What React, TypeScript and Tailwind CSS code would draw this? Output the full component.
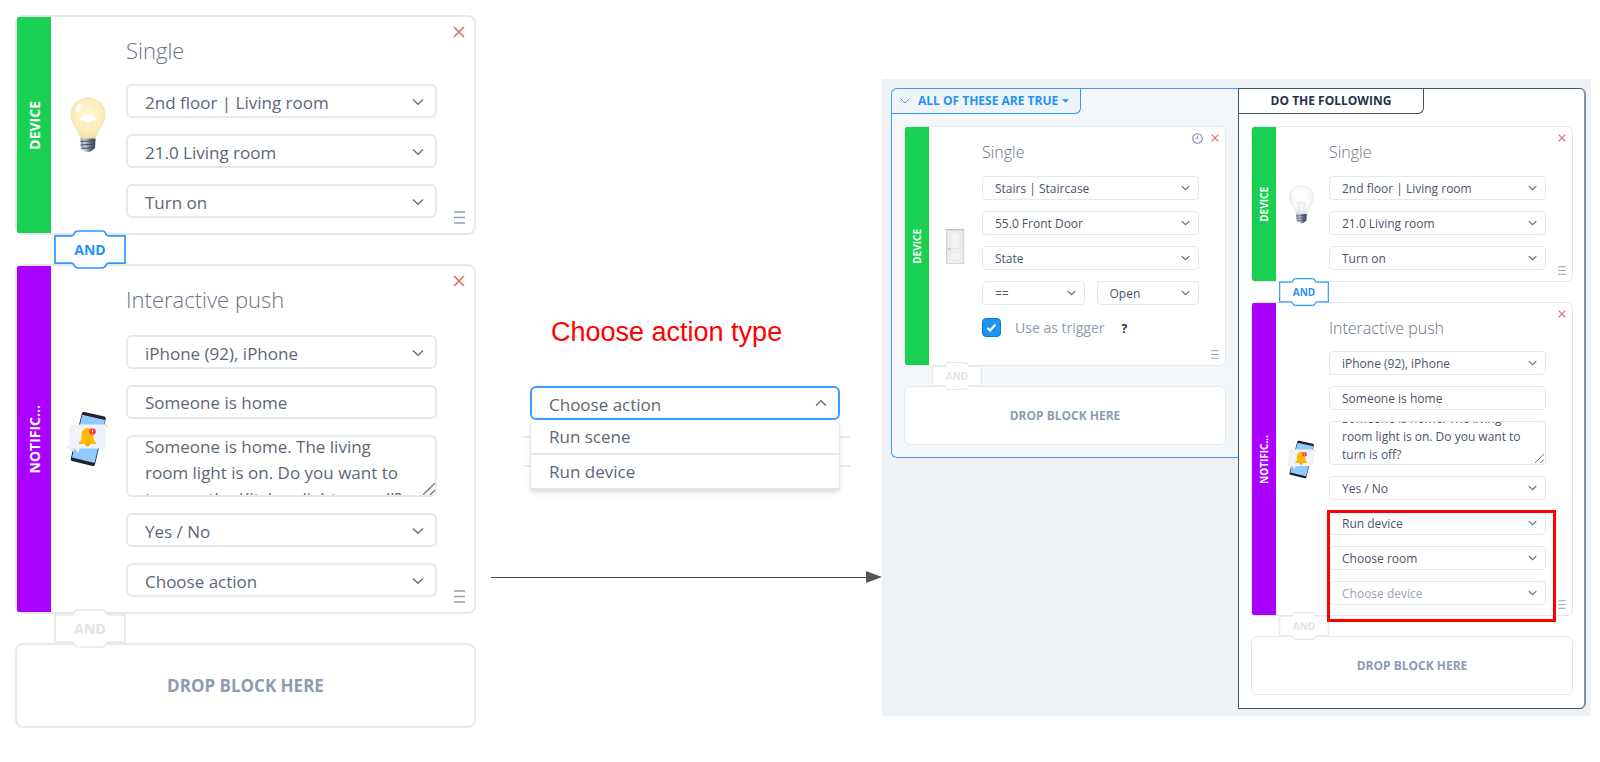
import React from 'react';

type Size = 'lg' | 'sm';

const ChevronIcon: React.FC<{ size: Size; up?: boolean }> = ({ size, up }) => (
  <svg
    viewBox="0 0 12 8"
    className={size === 'lg' ? 'w-3 h-2' : 'w-[9px] h-[6px]'}
    fill="none"
    stroke="#6b6f76"
    strokeWidth={size === 'lg' ? 1.4 : 1.7}
  >
    <path d={up ? 'M1 6.5 L6 1.8 L11 6.5' : 'M1 1.5 L6 6.2 L11 1.5'} />
  </svg>
);

const BulbIcon: React.FC<{ on?: boolean; className: string }> = ({ on, className }) => {
  const id = on ? 'bulb-on' : 'bulb-off';
  return (
    <svg viewBox="0 0 36 56" className={className}>
      <defs>
        <radialGradient id={id} cx="0.5" cy="0.42" r="0.62">
          <stop offset="0" stopColor={on ? '#fff8dc' : '#ffffff'} />
          <stop offset="0.65" stopColor={on ? '#fdedbb' : '#f8f8f9'} />
          <stop offset="1" stopColor={on ? '#f2dcab' : '#dfdfe2'} />
        </radialGradient>
        <linearGradient id={`${id}-base`} x1="0" x2="1">
          <stop offset="0" stopColor="#8d95a5" />
          <stop offset="0.3" stopColor="#c9ced8" />
          <stop offset="0.7" stopColor="#5b6478" />
          <stop offset="1" stopColor="#3f485c" />
        </linearGradient>
      </defs>
      <path
        d="M18 1 C8 1 1 8 1 17.5 C1 23 3.5 27 6 31 C8.5 35 9.5 37 10.5 41.5 L25.5 41.5 C26.5 37 27.5 35 30 31 C32.5 27 35 23 35 17.5 C35 8 28 1 18 1 Z"
        fill={`url(#${id})`}
        stroke={on ? '#efdfba' : '#dcdcde'}
        strokeWidth="0.8"
      />
      <path d="M15.5 40 L13.5 24 L16.5 27 L18 24 L19.5 27 L22.5 24 L20.5 40" fill="none" stroke={on ? '#f3e3b4' : '#cfcfd2'} strokeWidth="0.8" />
      <ellipse cx="18" cy="21.5" rx="8" ry="3.5" fill="#ffffff" opacity={on ? 0.8 : 0.4} />
      <ellipse cx="9" cy="11" rx="3" ry="4.5" transform="rotate(30 9 11)" fill="#ffffff" opacity="0.7" />
      <path d="M10.5 41.5 L25.5 41.5 L25 51 C23 53 21 55 18 55 C15 55 13 53 11 51 Z" fill={`url(#${id}-base)`} />
      <path d="M10.5 44.5 L25.5 43.5 M10.5 48 L25.5 47 M11.5 51.5 L24.5 50.5" stroke="#465066" strokeWidth="1" />
    </svg>
  );
};

const PhoneIcon: React.FC<{ className: string }> = ({ className }) => (
  <svg viewBox="0 0 44 56" className={className}>
    <path d="M18.5 1 L38.5 5.5 C39.5 6 40 7 39.7 8 L29 53.5 C28.5 55 27.5 55.3 26.5 55 L6 50 C5 49.5 4.5 48.5 4.8 47.5 L15.8 2.5 C16.2 1.2 17.2 0.7 18.5 1 Z" fill="#1f2227" />
    <path d="M16.2 3.8 L39 9 L28.5 52 L6 46.5 Z" fill="#8fcbff" />
    <path d="M38.5 12 L43 15 L39 18 Z" fill="#dfe5ec" />
    <path d="M0 35 L8 35 L8 41 Z" fill="#dfe5ec" />
    <path d="M5.5 13.5 H37 Q40 13.5 40 16.5 V34.5 Q40 37.5 37 37.5 H13.5 L12.5 42 L8.5 37.5 H5.5 Q3 37.5 3 34.5 V16.5 Q3 13.5 5.5 13.5 Z" fill="#f0f4f8" />
    <path d="M21.5 17 C24 17 27.5 19 27.5 24 C27.5 29 28 30.5 30 31.5 V33 H13 V31.5 C15 30.5 15.5 29 15.5 24 C15.5 19 19 17 21.5 17 Z" fill="#ffb900" />
    <path d="M19 33 H24 Q23.5 35.5 21.5 35.5 Q19.5 35.5 19 33 Z" fill="#f59f00" />
    <circle cx="26.5" cy="20.5" r="3.3" fill="#f03a4b" />
    <path d="M26.5 18.5 V21 M26.5 22 V22.7" stroke="#ffffff" strokeWidth="0.9" />
  </svg>
);

const DoorIcon: React.FC<{ className: string }> = ({ className }) => (
  <svg viewBox="0 0 18 35" className={className}>
    <rect width="18" height="35" fill="#d6d6d8" />
    <path d="M0 0 H18 V1.5 H0 Z" fill="#bfbfc2" />
    <rect x="1.5" y="1.5" width="15" height="32.5" fill="#efeeed" />
    <rect x="4.5" y="4" width="9.5" height="15.5" fill="#f3f2f1" stroke="#e3e2e0" strokeWidth="0.6" />
    <rect x="4.5" y="23.5" width="9.5" height="8" fill="#f3f2f1" stroke="#e3e2e0" strokeWidth="0.6" />
    <path d="M2.8 18.5 V21.5 M2.5 20 H4.5" stroke="#b9a98c" strokeWidth="0.7" />
  </svg>
);

const CloseIcon: React.FC<{ size: Size }> = ({ size }) => (
  <svg viewBox="0 0 12 12" className={size === 'lg' ? 'w-3 h-3' : 'w-2 h-2'} stroke="#e0705f" strokeWidth={size === 'lg' ? 1.7 : 1.9}>
    <path d="M1 1 L11 11 M11 1 L1 11" />
  </svg>
);

const HandleIcon: React.FC<{ size: Size }> = ({ size }) => (
  <svg viewBox="0 0 11 13" className={size === 'lg' ? 'w-[11px] h-[13px]' : 'w-2 h-[9px]'} stroke="#93a0b5" strokeWidth="1.6">
    <path d="M0 1 H11 M0 6.5 H11 M0 12 H11" />
  </svg>
);

interface SelectProps {
  size: Size;
  label: string;
  value: string;
  muted?: boolean;
}

const SelectField: React.FC<SelectProps> = ({ size, label, value, muted }) => (
  <div className="relative flex-1 min-w-0">
    <select
      aria-label={label}
      className={`block w-full appearance-none bg-white border-[#e5e9ee] outline-none ${
        size === 'lg'
          ? 'h-[34px] pl-[17px] pt-[3px] border-2 rounded-md text-[17px] leading-[24px]'
          : 'h-[24px] pl-3 pt-[1px] border rounded text-[12px] leading-[18px]'
      } ${muted ? 'text-[#98a4b8]' : size === 'lg' ? 'text-[#5d6778]' : 'text-[#4a556b]'}`}
    >
      <option>{value}</option>
    </select>
    <span className={`absolute inset-y-0 flex items-center pointer-events-none ${size === 'lg' ? 'right-[13px] pt-[2px]' : 'right-[9px]'}`}>
      <ChevronIcon size={size} />
    </span>
  </div>
);

const TextField: React.FC<{ size: Size; label: string; value: string }> = ({ size, label, value }) => (
  <input
    type="text"
    aria-label={label}
    defaultValue={value}
    className={`block w-full bg-white border-[#e5e9ee] outline-none ${
      size === 'lg'
        ? 'h-[34px] pl-[17px] border-2 rounded-md text-[17px] text-[#5d6778]'
        : 'h-[24px] pl-3 border rounded text-[12px] text-[#4a556b]'
    }`}
  />
);

const MessageField: React.FC<{ size: Size; value: string; scroll: number }> = ({ size, value, scroll }) => {
  const ref = React.useRef<HTMLTextAreaElement>(null);

  React.useLayoutEffect(() => {
    if (ref.current) ref.current.scrollTop = scroll;
  }, [scroll]);

  return (
    <div className="relative">
      <textarea
        ref={ref}
        aria-label="Message"
        defaultValue={value}
        className={`block w-full bg-white border-[#e5e9ee] outline-none resize-none overflow-hidden ${
          size === 'lg'
            ? 'h-[62px] pl-[17px] pr-6 border-2 rounded-md text-[17px] leading-[26px] text-[#5d6778]'
            : 'h-[44px] pl-3 pr-4 border rounded text-[12px] leading-[18px] text-[#4a556b]'
        }`}
      />
      <svg
        viewBox="0 0 12 12"
        className={`absolute right-[2px] bottom-[2px] ${size === 'lg' ? 'w-3 h-3' : 'w-[9px] h-[9px]'}`}
        stroke="#6f737a"
        strokeWidth="1.3"
      >
        <path d="M0 12 L12 0 M7 12 L12 7" />
      </svg>
    </div>
  );
};

interface BlockProps {
  size: Size;
  kind: 'DEVICE' | 'NOTIFIC...';
  title: string;
  icon: React.ReactNode;
  timer?: boolean;
  className?: string;
  children: React.ReactNode;
}

const Block: React.FC<BlockProps> = ({ size, kind, title, icon, timer, className = '', children }) => {
  const lg = size === 'lg';
  const device = kind === 'DEVICE';
  const fieldsGap = lg
    ? device ? 'mt-[19px] gap-4' : 'mt-[21px] gap-4'
    : device ? 'mt-[13px] gap-[11px]' : 'mt-3 gap-[11px]';

  return (
    <section className={`relative flex bg-white border-[#e5e9ee] ${lg ? 'border-2 rounded-lg' : 'border rounded-md'} ${className}`}>
      <div
        className={`flex items-center justify-center shrink-0 rounded-l-[2px] ${device ? 'bg-[#19d053]' : 'bg-[#aa00ff]'} ${
          lg ? 'w-[34px]' : 'w-6'
        }`}
      >
        <span className={`[writing-mode:vertical-rl] rotate-180 font-bold text-white ${lg ? 'text-[14px]' : 'text-[10px]'}`}>{kind}</span>
      </div>
      <div className={`flex items-center justify-center shrink-0 ${lg ? 'w-[75px] pr-[2px]' : 'w-[53px] pr-[2px]'}`}>{icon}</div>
      <div className={`flex-1 min-w-0 ${lg ? 'pt-[18px] pr-[37px]' : 'pt-[14px] pr-[26px]'}`}>
        <h3 className={`font-light text-[#6b7485] ${lg ? 'text-[22px] leading-[30px]' : 'text-[16px] leading-[22px]'}`}>{title}</h3>
        <div className={`flex flex-col ${fieldsGap}`}>{children}</div>
      </div>
      <div className={`absolute flex items-center h-3 ${lg ? 'top-[9px] right-[9px]' : 'top-[5px] right-[6px] gap-2'}`}>
        {timer && (
          <button type="button" aria-label="Timer">
            <svg viewBox="0 0 12 12" className="w-[11px] h-[11px]" fill="none" stroke="#7c8ba5">
              <circle cx="6" cy="6" r="5.2" strokeWidth="1.2" />
              <path d="M6 2.8 V6.3 H3.8" strokeWidth="1" />
            </svg>
          </button>
        )}
        <button type="button" aria-label="Remove block">
          <CloseIcon size={size} />
        </button>
      </div>
      <button type="button" aria-label="Move block" className={`absolute ${lg ? 'right-[9px] bottom-[9px]' : 'right-[6px] bottom-[6px]'}`}>
        <HandleIcon size={size} />
      </button>
    </section>
  );
};

const Connector: React.FC<{ size: Size; active?: boolean }> = ({ size, active }) => (
  <button
    type="button"
    className={`relative z-10 block font-bold ${active ? 'text-[#2492fa]' : 'text-[#e1e5e9]'} ${
      size === 'lg' ? 'w-[72px] h-[39px] -my-[5px] ml-[39px] text-[14px]' : 'w-[50px] h-7 -my-1 ml-7 text-[10px]'
    }`}
  >
    <svg
      viewBox="0 0 72 40"
      preserveAspectRatio="none"
      className="absolute inset-0 w-full h-full"
      fill="#ffffff"
      stroke={active ? '#2f98fb' : '#e5e9ee'}
      strokeWidth="1.7"
    >
      <path d="M1 6 H17 Q19.5 6 20 4 Q21 1 24 1 H48 Q51 1 52 4 Q52.5 6 55 6 H71 V34 H55 Q52.5 34 52 36 Q51 39 48 39 H24 Q21 39 20 36 Q19.5 34 17 34 H1 Z" />
    </svg>
    <span className="relative">AND</span>
  </button>
);

const DropZone: React.FC<{ size: Size }> = ({ size }) => (
  <div
    className={`flex items-center justify-center bg-white border-[#e5e9ee] font-bold text-[#8d9bb3] ${
      size === 'lg' ? 'h-[85px] border-2 rounded-lg text-[17px]' : 'h-[59px] border rounded-md text-[12px]'
    }`}
  >
    DROP BLOCK HERE
  </div>
);

const ActionsBefore: React.FC = () => (
  <div className="pt-[15px]">
    <Block size="lg" kind="DEVICE" title="Single" className="h-[220px]" icon={<BulbIcon on className="w-9 h-14" />}>
      <SelectField size="lg" label="Room" value="2nd floor | Living room" />
      <SelectField size="lg" label="Device" value="21.0 Living room" />
      <SelectField size="lg" label="Action" value="Turn on" />
    </Block>
    <Connector size="lg" active />
    <Block size="lg" kind="NOTIFIC..." title="Interactive push" className="h-[350px]" icon={<PhoneIcon className="w-11 h-14" />}>
      <SelectField size="lg" label="Recipient" value="iPhone (92), iPhone" />
      <TextField size="lg" label="Title" value="Someone is home" />
      <MessageField
        size="lg"
        value="Someone is home. The living room light is on. Do you want to turn on the Kitchen light as well?"
        scroll={3}
      />
      <SelectField size="lg" label="Buttons" value="Yes / No" />
      <SelectField size="lg" label="Action type" value="Choose action" />
    </Block>
    <Connector size="lg" />
    <DropZone size="lg" />
  </div>
);

const ActionTypeMenu: React.FC = () => (
  <div className="flex flex-col pt-[315px]">
    <h2 className="pl-[75px] text-[27px] leading-[34px] text-[#ff0000] font-['Liberation_Sans',Arial,sans-serif]">Choose action type</h2>
    <div className="relative mt-[37px] ml-[54px] mr-[42px] text-[17px] text-[#5d6778]">
      <div className="absolute top-[50px] -left-[7px] -right-[10px] h-[31px] border-y-2 border-[#e8ecf0]" />
      <button
        type="button"
        aria-haspopup="listbox"
        aria-expanded="true"
        className="relative flex items-center justify-between w-full h-[34px] pl-[17px] pr-[11px] border-2 border-[#3b9dfb] rounded-md bg-white"
      >
        <span className="pt-[3px]">Choose action</span>
        <ChevronIcon size="lg" up />
      </button>
      <ul role="listbox" aria-label="Action type" className="relative bg-white border-x border-b-2 border-[#e0e6ec] shadow-md">
        <li role="option" aria-selected="false" className="h-[35px] pl-[18px] leading-[34px] border-b-2 border-[#e5e9ee]">Run scene</li>
        <li role="option" aria-selected="false" className="h-[33px] pl-[18px] leading-[33px]">Run device</li>
      </ul>
    </div>
    <div className="flex items-center mt-[81px] ml-[15px]">
      <div className="flex-1 h-px bg-[#444444]" />
      <svg viewBox="0 0 16 12" className="w-4 h-3">
        <path d="M0 0 L16 6 L0 12 Z" fill="#555555" />
      </svg>
    </div>
  </div>
);

const Conditions: React.FC = () => (
  <div className="h-[370px] border border-r-0 border-[#3b9dfb] rounded-l-md bg-[#f3f7fa]">
    <button
      type="button"
      className="flex items-center h-[25px] w-[189px] pl-2 border-r border-b border-[#2e97fb] rounded-br-md rounded-tl-md bg-[#eff4f8] text-[12px] font-bold text-[#2492fa]"
    >
      <svg viewBox="0 0 10 6" className="w-[10px] h-[6px] mr-2" fill="none" stroke="#2e97fb">
        <path d="M0.5 0.5 L5 5 L9.5 0.5" />
      </svg>
      ALL OF THESE ARE TRUE
      <svg viewBox="0 0 8 4" className="w-[7px] h-1 ml-1" fill="#2492fa">
        <path d="M0 0 H8 L4 4 Z" />
      </svg>
    </button>
    <div className="pt-3 px-3">
      <Block size="sm" kind="DEVICE" title="Single" timer className="h-[240px]" icon={<DoorIcon className="w-[18px] h-[35px]" />}>
        <SelectField size="sm" label="Room" value="Stairs | Staircase" />
        <SelectField size="sm" label="Device" value="55.0 Front Door" />
        <SelectField size="sm" label="Property" value="State" />
        <div className="flex gap-3">
          <SelectField size="sm" label="Operator" value="==" />
          <SelectField size="sm" label="Value" value="Open" />
        </div>
        <div className="flex items-center text-[14px] text-[#8d9bb3]">
          <span className="relative block w-[19px] h-[19px]">
            <input
              id="use-as-trigger"
              type="checkbox"
              defaultChecked
              className="block w-full h-full appearance-none rounded border border-[#1477cf] bg-[#1c95f3]"
            />
            <svg viewBox="0 0 12 10" className="absolute inset-0 m-auto w-[11px] h-[9px] pointer-events-none" fill="none" stroke="#ffffff" strokeWidth="2.4">
              <path d="M1.5 5.5 L4.5 8.3 L10.5 1.5" />
            </svg>
          </span>
          <label htmlFor="use-as-trigger" className="pl-[14px] pt-[2px] leading-5">Use as trigger</label>
          <button type="button" aria-label="Help" className="pl-[17px] pt-[3px] text-[12px] font-bold text-[#26324a]">?</button>
        </div>
      </Block>
      <Connector size="sm" />
      <DropZone size="sm" />
    </div>
  </div>
);

const Actions: React.FC = () => (
  <div className="h-[621px] border border-r-2 border-[#4a5366] border-r-[#868d9b] rounded-r-md bg-white">
    <h2 className="flex items-center justify-center h-[25px] w-[185px] border-r border-b border-[#4a5366] rounded-br-md text-[12px] font-bold text-[#26324a]">
      DO THE FOLLOWING
    </h2>
    <div className="pt-3 pl-3 pr-[11px]">
      <Block size="sm" kind="DEVICE" title="Single" className="h-[156px]" icon={<BulbIcon className="w-[25px] h-[39px]" />}>
        <SelectField size="sm" label="Room" value="2nd floor | Living room" />
        <SelectField size="sm" label="Device" value="21.0 Living room" />
        <SelectField size="sm" label="Action" value="Turn on" />
      </Block>
      <Connector size="sm" active />
      <Block size="sm" kind="NOTIFIC..." title="Interactive push" className="h-[314px]" icon={<PhoneIcon className="w-[31px] h-[39px]" />}>
        <SelectField size="sm" label="Recipient" value="iPhone (92), iPhone" />
        <TextField size="sm" label="Title" value="Someone is home" />
        <MessageField size="sm" value="Someone is home. The living room light is on. Do you want to turn is off?" scroll={12} />
        <SelectField size="sm" label="Buttons" value="Yes / No" />
        <div className="relative flex flex-col gap-[11px]">
          <SelectField size="sm" label="Action type" value="Run device" />
          <SelectField size="sm" label="Action room" value="Choose room" />
          <SelectField size="sm" label="Action device" value="Choose device" muted />
          <div className="absolute -top-[1px] -left-[2px] -right-[10px] -bottom-[17px] z-20 border-[3px] border-[#ff0000] pointer-events-none" />
        </div>
      </Block>
      <Connector size="sm" />
      <DropZone size="sm" />
    </div>
  </div>
);

export default function App() {
  return (
    <main className="grid grid-cols-[461fr_406fr_709fr] items-start min-h-screen pl-[15px] pr-[9px] bg-white font-['Open_Sans',sans-serif]">
      <ActionsBefore />
      <ActionTypeMenu />
      <div className="grid grid-cols-[347fr_348fr] items-start mt-[79px] pt-[9px] pb-[7px] pl-[9px] pr-[5px] bg-[#eef2f5]">
        <Conditions />
        <Actions />
      </div>
    </main>
  );
}
